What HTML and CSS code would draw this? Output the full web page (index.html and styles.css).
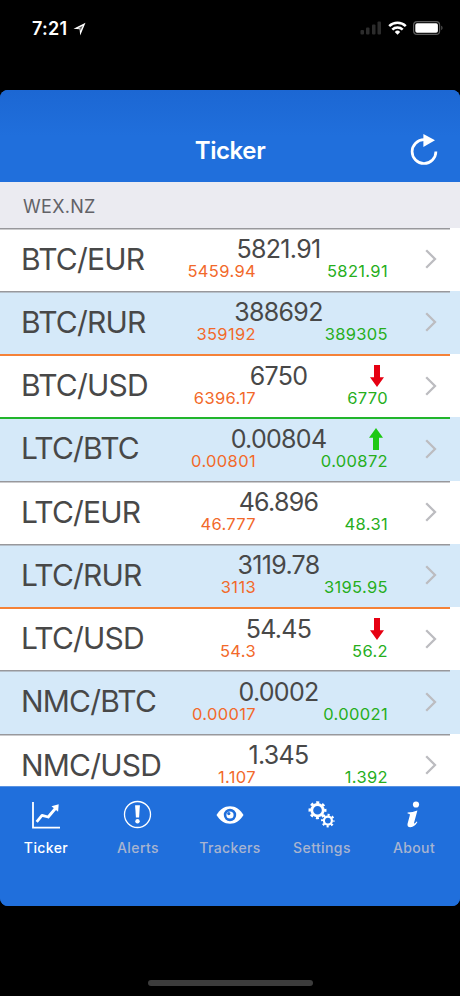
FILE: index.html
```html
<!DOCTYPE html>
<html lang="en">
<head>
    <meta charset="UTF-8">
    <meta name="viewport" content="width=device-width, initial-scale=1.0">
    <title>Ticker</title>
    <link rel="stylesheet" href="styles.css">
</head>
<body>
    <!-- shared icons -->
    <svg class="sprite" width="0" height="0">
        <symbol id="chevron" viewBox="0 0 12 20">
            <path d="M1.2 1.2 L10 10 L1.2 18.8" fill="none" stroke="#bcbcc0" stroke-width="2.3"/>
        </symbol>
        <symbol id="arrow-down" viewBox="0 0 14 22">
            <path d="M4 0h6v12.3h4L7 22 0 12.3h4z" fill="#e60012"/>
        </symbol>
        <symbol id="arrow-up" viewBox="0 0 14 22">
            <path d="M7 0l7 9.7h-4V22H4V9.7H0z" fill="#1ec814"/>
        </symbol>
    </svg>

    <div class="status-bar">
        <span class="time">7:21</span>
        <svg class="location" width="13" height="14" viewBox="0 0 13 14">
            <path d="M0.5 6.8L12.5 0.8 7.2 13.5 6.6 7.3z" fill="#fff"/>
            <path d="M4.8 6.3L9.8 3.7 7.4 9 7.2 6.4z" fill="#000" opacity="0.6"/>
        </svg>
        <div class="status-icons">
            <svg width="22" height="14" viewBox="0 0 22 14" fill="#2c2c2c">
                <rect x="0.5" y="9" width="3.5" height="4.5" rx="1"/>
                <rect x="6" y="6.5" width="3.5" height="7" rx="1"/>
                <rect x="12" y="3.5" width="3.5" height="10" rx="1"/>
                <rect x="17.5" y="0.5" width="3.5" height="13" rx="1"/>
            </svg>
            <svg width="19" height="14" viewBox="0 0 19 14" fill="none" stroke="#fff" stroke-width="2.5">
                <path d="M1.2 5.2a11.8 11.8 0 0 1 16.6 0"/>
                <path d="M4.3 8.6a7.4 7.4 0 0 1 10.4 0"/>
                <path d="M9.5 13.7L6.8 10.9a3.9 3.9 0 0 1 5.4 0z" fill="#fff" stroke="none"/>
            </svg>
            <svg width="30" height="14" viewBox="0 0 30 14">
                <rect x="0.6" y="0.6" width="26" height="12.8" rx="3.5" fill="none" stroke="#5c5c5c" stroke-width="1.2"/>
                <rect x="2.3" y="2.3" width="22.6" height="9.4" rx="1.8" fill="#fff"/>
                <path d="M28.3 4.8v4.4c1.6-.6 1.6-3.8 0-4.4z" fill="#5c5c5c"/>
            </svg>
        </div>
    </div>

    <div class="app">
        <header class="nav-bar">
            <h1>Ticker</h1>
            <svg class="refresh" width="28" height="32" viewBox="0 0 28 32">
                <path d="M14 5.7A11.9 11.9 0 1 0 25.9 17.6" fill="none" stroke="#fff" stroke-width="2.7"/>
                <path d="M13.4 0L25 6.2 13.4 13z" fill="#fff"/>
            </svg>
        </header>

        <h2 class="section-title">WEX.NZ</h2>

        <div class="ticker-list">
            <div class="row">
                <span class="pair">BTC/EUR</span>
                <div class="quotes">
                    <span class="price">5821.91</span>
                    <span class="low">5459.94</span>
                    <span class="high">5821.91</span>
                </div>
                <svg class="chevron"><use href="#chevron"/></svg>
            </div>
            <div class="row">
                <span class="pair">BTC/RUR</span>
                <div class="quotes">
                    <span class="price">388692</span>
                    <span class="low">359192</span>
                    <span class="high">389305</span>
                </div>
                <svg class="chevron"><use href="#chevron"/></svg>
            </div>
            <div class="row fall">
                <span class="pair">BTC/USD</span>
                <div class="quotes">
                    <span class="price">6750</span>
                    <span class="low">6396.17</span>
                    <span class="high">6770</span>
                    <svg class="trend"><use href="#arrow-down"/></svg>
                </div>
                <svg class="chevron"><use href="#chevron"/></svg>
            </div>
            <div class="row rise">
                <span class="pair">LTC/BTC</span>
                <div class="quotes">
                    <span class="price">0.00804</span>
                    <span class="low">0.00801</span>
                    <span class="high">0.00872</span>
                    <svg class="trend"><use href="#arrow-up"/></svg>
                </div>
                <svg class="chevron"><use href="#chevron"/></svg>
            </div>
            <div class="row">
                <span class="pair">LTC/EUR</span>
                <div class="quotes">
                    <span class="price">46.896</span>
                    <span class="low">46.777</span>
                    <span class="high">48.31</span>
                </div>
                <svg class="chevron"><use href="#chevron"/></svg>
            </div>
            <div class="row">
                <span class="pair">LTC/RUR</span>
                <div class="quotes">
                    <span class="price">3119.78</span>
                    <span class="low">3113</span>
                    <span class="high">3195.95</span>
                </div>
                <svg class="chevron"><use href="#chevron"/></svg>
            </div>
            <div class="row fall">
                <span class="pair">LTC/USD</span>
                <div class="quotes">
                    <span class="price">54.45</span>
                    <span class="low">54.3</span>
                    <span class="high">56.2</span>
                    <svg class="trend"><use href="#arrow-down"/></svg>
                </div>
                <svg class="chevron"><use href="#chevron"/></svg>
            </div>
            <div class="row">
                <span class="pair">NMC/BTC</span>
                <div class="quotes">
                    <span class="price">0.0002</span>
                    <span class="low">0.00017</span>
                    <span class="high">0.00021</span>
                </div>
                <svg class="chevron"><use href="#chevron"/></svg>
            </div>
            <div class="row">
                <span class="pair">NMC/USD</span>
                <div class="quotes">
                    <span class="price">1.345</span>
                    <span class="low">1.107</span>
                    <span class="high">1.392</span>
                </div>
                <svg class="chevron"><use href="#chevron"/></svg>
            </div>
        </div>

        <nav class="tab-bar">
            <div class="tab active">
                <svg width="30" height="30" viewBox="0 0 30 30">
                    <path d="M2 2v25.7h27" fill="none" stroke="#fff" stroke-width="1.8"/>
                    <path d="M5.7 21.8L11 15.4l6.2 1.6 7.6-9" fill="none" stroke="#fff" stroke-width="2.8" stroke-linejoin="round"/>
                    <path d="M20.5 6.2l7.2-2-.6 7.6z" fill="#fff"/>
                </svg>
                <span>Ticker</span>
            </div>
            <div class="tab">
                <svg width="30" height="30" viewBox="0 0 30 30">
                    <circle cx="14.5" cy="14.5" r="13" fill="none" stroke="#fff" stroke-width="1.3"/>
                    <path d="M12.1 5.2h4.8l-.8 12.4h-3.2z" fill="#fff"/>
                    <circle cx="14.5" cy="21.2" r="2.2" fill="#fff"/>
                </svg>
                <span>Alerts</span>
            </div>
            <div class="tab">
                <svg width="30" height="30" viewBox="0 0 30 30">
                    <path d="M1.5 15C5 9.2 9.3 6.3 15 6.3S25 9.2 28.5 15C25 20.8 20.7 23.7 15 23.7S5 20.8 1.5 15z" fill="#fff"/>
                    <circle cx="15" cy="15" r="4.9" fill="none" stroke="#206fdc" stroke-width="2.6"/>
                    <circle cx="13.8" cy="13.6" r="1.6" fill="#206fdc"/>
                </svg>
                <span>Trackers</span>
            </div>
            <div class="tab">
                <svg width="30" height="30" viewBox="0 0 30 30" fill="none" stroke="#fff">
                    <circle cx="10.5" cy="10.2" r="5.7" stroke-width="2.8"/>
                    <circle cx="10.5" cy="10.2" r="7.7" stroke-width="2.6" stroke-dasharray="3 3.048" stroke-dashoffset="1.5"/>
                    <circle cx="20.9" cy="20.6" r="4" stroke-width="2.2"/>
                    <circle cx="20.9" cy="20.6" r="5.7" stroke-width="2.2" stroke-dasharray="2.1 2.377" stroke-dashoffset="1.05"/>
                </svg>
                <span>Settings</span>
            </div>
            <div class="tab">
                <svg width="30" height="30" viewBox="0 0 30 30" fill="#fff">
                    <circle cx="17" cy="4.5" r="3.1"/>
                    <path d="M8.600 12.600c3.600-.4 6.400-1 9.800-2.200L15.200 22.200c-.3 1.200.1 1.500.7 1 .7-.6 1.100-1.100 1.600-1.800l.9.700c-1.800 3.200-4.100 5.200-7 5.200-2.400 0-3.400-1.500-2.800-3.800l2.200-8c.4-1.400-.2-1.800-2.200-1.900z"/>
                </svg>
                <span>About</span>
            </div>
        </nav>
    </div>

    <div class="home-indicator"></div>
</body>
</html>
```
FILE: styles.css
```css
* {
    box-sizing: border-box;
}

body {
    margin: 0;
    width: 460px;
    height: 996px;
    overflow: hidden;
    background-color: #000;
    font-family: Inter, "Liberation Sans", sans-serif;
}

.sprite {
    display: block;
}

/* status bar */
.status-bar {
    display: flex;
    align-items: center;
    height: 90px;
    padding: 0 17px 34px 32px;
    color: #fff;
}

.time {
    font-size: 18px;
    font-weight: 600;
    letter-spacing: 0.3px;
}

.location {
    margin: 2px 0 0 5px;
}

.status-icons {
    display: flex;
    gap: 6px;
    margin-left: auto;
}

/* app window */
.app {
    display: flex;
    flex-direction: column;
    height: 816px;
    border-radius: 8px;
    overflow: hidden;
    background-color: #206fdc;
}

.nav-bar {
    display: grid;
    grid-template-columns: 1fr auto 1fr;
    align-items: center;
    flex: none;
    height: 92px;
    padding: 30px 22px 1px;
    background: linear-gradient(#1c67d3, #206fdc 50%);
    color: #fff;
}

.nav-bar h1 {
    grid-column: 2;
    margin: 0;
    font-size: 24px;
    font-weight: 600;
    letter-spacing: -0.4px;
}

.refresh {
    justify-self: end;
    margin-bottom: 1px;
}

.section-title {
    flex: none;
    height: 45.6px;
    margin: 0;
    padding: 4px 23px 0;
    background-color: #ebebf1;
    color: #626267;
    font-size: 18px;
    font-weight: 400;
    line-height: 42px;
    letter-spacing: 0.3px;
}

/* price rows */
.ticker-list {
    flex: none;
    height: 558.4px;
    overflow: hidden;
    background-color: #fff;
}

.row {
    display: flex;
    align-items: center;
    height: 63.25px;
    padding-left: 21px;
    background: linear-gradient(#98989c, #98989c) no-repeat 0 0 / 450px 1.5px #fff;
}

.row:nth-child(even) {
    background-color: #d5e9f9;
}

.row.fall {
    background-image: linear-gradient(#f58238, #f58238);
    background-size: 450px 2px;
}

.row.rise {
    background-image: linear-gradient(#22b52c, #22b52c);
    background-size: 450px 2px;
}

.pair {
    width: 148px;
    padding-bottom: 1px;
    color: #484848;
    font-size: 30px;
    letter-spacing: -0.8px;
    white-space: nowrap;
}

.quotes {
    display: grid;
    grid-template-columns: 87px 132px;
    position: relative;
    padding-bottom: 2px;
    text-align: right;
    font-size: 16.5px;
    line-height: 18px;
    letter-spacing: 0.35px;
}

.price {
    grid-column: span 2;
    text-align: center;
    color: #484848;
    font-size: 25px;
    line-height: 26px;
    letter-spacing: -0.7px;
}

.low {
    color: #f2692a;
}

.high {
    color: #26ae1c;
}

.trend {
    position: absolute;
    top: 2px;
    right: 4px;
    width: 14px;
    height: 22px;
}

.rise .trend {
    right: 5px;
}

.chevron {
    width: 12px;
    height: 20px;
    margin-left: 37px;
}

/* bottom tabs */
.tab-bar {
    display: grid;
    grid-template-columns: repeat(5, 1fr);
    flex: 1;
    padding-top: 13px;
    border-top: 1px solid #5a93e2;
    background-color: #206fdc;
}

.tab {
    display: flex;
    flex-direction: column;
    align-items: center;
    gap: 9px;
    color: #a8b4d0;
    font-size: 14px;
    font-weight: 500;
    line-height: 18px;
    letter-spacing: 0.4px;
}

.tab.active {
    color: #fff;
}

.home-indicator {
    width: 165px;
    height: 6px;
    margin: 74px auto 0;
    border-radius: 3px;
    background-color: #3c3c3c;
}
```
